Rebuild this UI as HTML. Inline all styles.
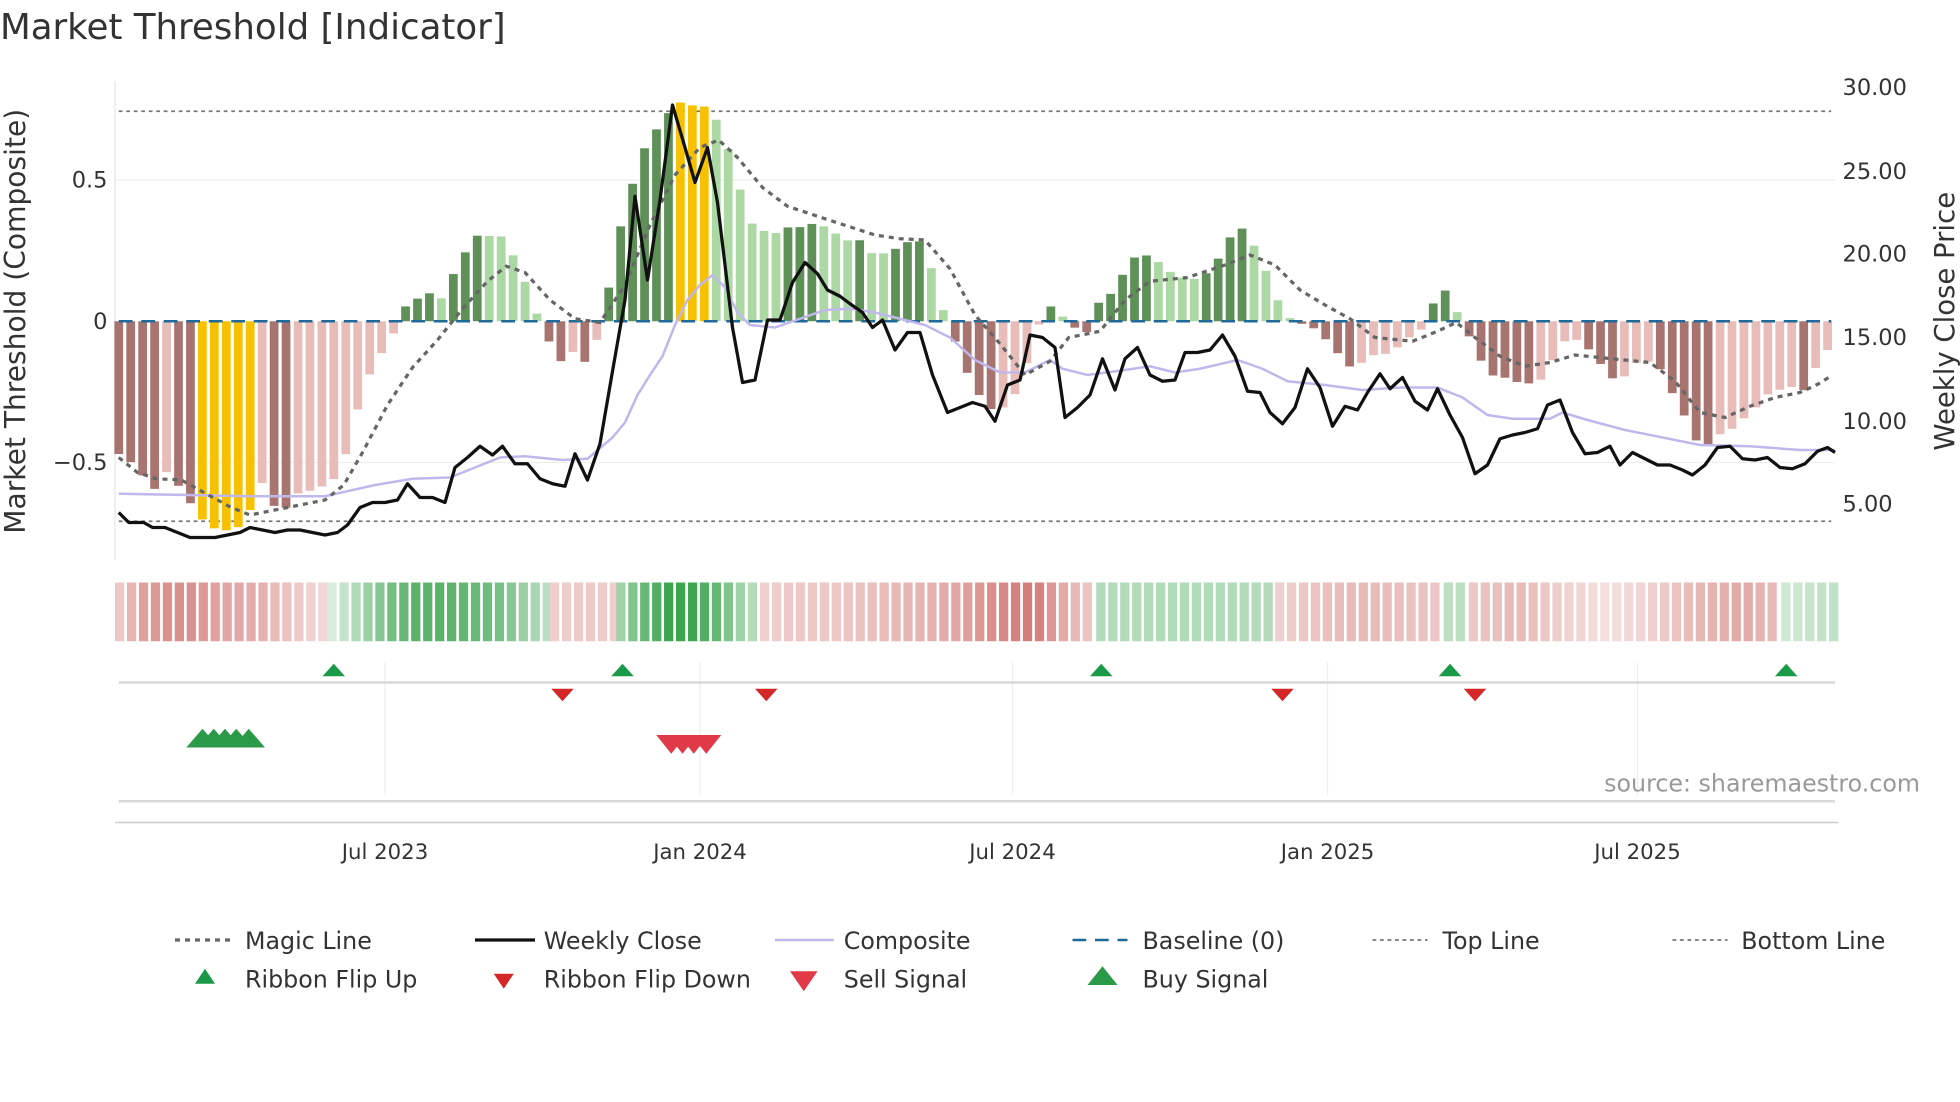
<!DOCTYPE html>
<html><head><meta charset="utf-8"><style>
html,body{margin:0;padding:0;background:#fff;width:1960px;height:1102px;overflow:hidden}
svg{display:block}
text{font-family:"DejaVu Sans","Liberation Sans",sans-serif;fill:#333}
</style></head><body>
<svg id="s" width="1960" height="1102" viewBox="0 0 1568 881.6" xmlns="http://www.w3.org/2000/svg">
<text x="0" y="31" font-size="28.5">Market Threshold [Indicator]</text>
<line x1="92" y1="65" x2="92" y2="448" stroke="#e4e4ec" stroke-width="1"/>
<line x1="92" y1="144" x2="1468" y2="144" stroke="#eee" stroke-width="1"/>
<line x1="92" y1="370" x2="1468" y2="370" stroke="#eee" stroke-width="1"/>
<line x1="95" y1="89" x2="1465" y2="89" stroke="#777" stroke-width="1.4" stroke-dasharray="3,3"/>
<line x1="95" y1="417" x2="1465" y2="417" stroke="#777" stroke-width="1.4" stroke-dasharray="3,3"/>
<g id="bars"></g>
<line x1="95" y1="257" x2="1465" y2="257" stroke="#1f6a9a" stroke-width="2" stroke-dasharray="11,7"/>
<polyline id="comp" fill="none" stroke="#c0b8ec" stroke-width="2"/>
<polyline id="magic" fill="none" stroke="#666" stroke-width="2.6" stroke-dasharray="4,4"/>
<polyline id="close" fill="none" stroke="#111" stroke-width="2.6" stroke-linejoin="round"/>
<text x="86" y="150" font-size="18" text-anchor="end">0.5</text>
<text x="86" y="263" font-size="18" text-anchor="end">0</text>
<text x="86" y="376" font-size="18" text-anchor="end">−0.5</text>
<text x="1474" y="76" font-size="18">30.00</text>
<text x="1474" y="143" font-size="18">25.00</text>
<text x="1474" y="209" font-size="18">20.00</text>
<text x="1474" y="276" font-size="18">15.00</text>
<text x="1474" y="343" font-size="18">10.00</text>
<text x="1474" y="409" font-size="18">5.00</text>
<text transform="translate(20,257) rotate(-90)" font-size="22.5" text-anchor="middle">Market Threshold (Composite)</text>
<text transform="translate(1563,257) rotate(-90)" font-size="22" text-anchor="middle">Weekly Close Price</text>
<g id="rib"></g>
<g stroke="#eceef2" stroke-width="1">
<line x1="308" y1="530" x2="308" y2="636"/><line x1="560" y1="530" x2="560" y2="636"/><line x1="810" y1="530" x2="810" y2="636"/><line x1="1062" y1="530" x2="1062" y2="636"/><line x1="1310" y1="530" x2="1310" y2="636"/>
</g>
<line x1="95" y1="546" x2="1468" y2="546" stroke="#d8d8d8" stroke-width="2"/>
<line x1="95" y1="641" x2="1468" y2="641" stroke="#d8d8d8" stroke-width="2"/>
<line x1="92" y1="658" x2="1471" y2="658" stroke="#ccc" stroke-width="1.2"/>
<g id="mk"></g>
<text x="1536" y="633" font-size="19" text-anchor="end" style="fill:#999">source: sharemaestro.com</text>
<g font-size="17" text-anchor="middle">
<text x="308" y="687">Jul 2023</text><text x="560" y="687">Jan 2024</text><text x="810" y="687">Jul 2024</text><text x="1062" y="687">Jan 2025</text><text x="1310" y="687">Jul 2025</text>
</g>
<g font-size="19">
<line x1="140" y1="752" x2="185" y2="752" stroke="#666" stroke-width="2.6" stroke-dasharray="4,4"/><text x="196" y="759">Magic Line</text>
<line x1="380" y1="752" x2="428" y2="752" stroke="#111" stroke-width="2.6"/><text x="435" y="759">Weekly Close</text>
<line x1="620" y1="752" x2="667" y2="752" stroke="#c0b8ec" stroke-width="2"/><text x="675" y="759">Composite</text>
<line x1="858" y1="752" x2="902" y2="752" stroke="#1f6a9a" stroke-width="2" stroke-dasharray="11,7"/><text x="914" y="759">Baseline (0)</text>
<line x1="1098" y1="752" x2="1142" y2="752" stroke="#777" stroke-width="1.4" stroke-dasharray="3,3"/><text x="1154" y="759">Top Line</text>
<line x1="1338" y1="752" x2="1382" y2="752" stroke="#777" stroke-width="1.4" stroke-dasharray="3,3"/><text x="1393" y="759">Bottom Line</text>
<polygon points="164,775 172,787 156,787" fill="#1a9a48"/><text x="196" y="790">Ribbon Flip Up</text>
<polygon points="395,779 411,779 403,791" fill="#d42828"/><text x="435" y="790">Ribbon Flip Down</text>
<polygon points="632,777 654,777 643,793" fill="#e03a48"/><text x="675" y="790">Sell Signal</text>
<polygon points="882,773 894,788 870,788" fill="#2a9a48"/><text x="914" y="790">Buy Signal</text>
</g>
</svg>
<script>
var NS="http://www.w3.org/2000/svg";
function el(p,t,a){var e=document.createElementNS(NS,t);for(var k in a)e.setAttribute(k,a[k]);p.appendChild(e);return e;}
var V=[[95,-.47],[105,-.5],[115,-.55],[125,-.6],[135,-.52],[145,-.6],[155,-.66],[165,-.72],[175,-.74],[185,-.74],[195,-.72],[210,-.57],[220,-.66],[230,-.66],[240,-.6],[250,-.6],[260,-.58],[270,-.55],[280,-.43],[290,-.24],[300,-.15],[310,-.08],[318,-.02],[326,.07],[334,.08],[343,.1],[353,.08],[363,.17],[373,.25],[383,.31],[393,.3],[403,.3],[412,.22],[421,.13],[431,.01],[440,-.08],[450,-.15],[460,-.1],[469,-.15],[478,-.06],[488,.14],[498,.37],[507,.5],[517,.63],[527,.69],[537,.75],[546,.78],[556,.76],[566,.76],[575,.7],[585,.58],[595,.42],[604,.32],[614,.32],[623,.31],[633,.34],[643,.33],[652,.35],[662,.33],[672,.3],[681,.28],[691,.29],[700,.22],[710,.25],[720,.26],[729,.29],[738,.28],[748,.15],[757,0],[767,-.1],[776,-.21],[786,-.28],[795,-.32],[805,-.3],[815,-.24],[825,-.1],[834,.03],[843,.06],[853,0],[862,-.03],[871,-.04],[880,.08],[890,.1],[900,.18],[910,.24],[920,.23],[930,.2],[940,.16],[950,.15],[960,.15],[970,.19],[980,.26],[990,.35],[1000,.29],[1010,.22],[1018,.1],[1028,.04],[1036,-.02],[1046,0],[1056,-.05],[1066,-.08],[1076,-.16],[1086,-.16],[1096,-.12],[1106,-.12],[1116,-.1],[1126,-.06],[1136,-.04],[1146,.06],[1156,.11],[1166,.03],[1176,-.06],[1186,-.15],[1196,-.2],[1206,-.2],[1216,-.22],[1226,-.22],[1236,-.2],[1246,-.1],[1256,-.05],[1266,-.08],[1276,-.12],[1286,-.19],[1296,-.22],[1306,-.15],[1316,-.14],[1326,-.15],[1336,-.24],[1346,-.32],[1356,-.42],[1366,-.44],[1376,-.4],[1386,-.38],[1396,-.34],[1406,-.3],[1416,-.25],[1426,-.24],[1436,-.23],[1446,-.25],[1456,-.12],[1466,-.09]];
var bars=document.getElementById("bars");
function interp(x){for(var i=0;i<V.length-1;i++){if(x<=V[i+1][0]){var t=(x-V[i][0])/(V[i+1][0]-V[i][0]);return V[i][1]+t*(V[i+1][1]-V[i][1]);}}return V[V.length-1][1];}
var prev=-.45,N=144;
for(var i=0;i<N;i++){var x=95+i*9.56;if(x>1468)break;var v=interp(x);var y0=257,h=v*226;var c;
 if((x>160&&x<205)||(x>540&&x<570))c="#f7c100";
 else if(v>=0)c=(v>prev)?"#5e9058":"#acd8a4";
 else c=(v<prev)?"#a87470":"#e8bcb8";
 el(bars,"rect",{x:x-3.5,y:h>0?y0-h:y0,width:7,height:Math.max(Math.abs(h),1),fill:c});prev=v;}
var C=[[95,410],[103,418],[115,418],[122,422],[132,422],[142,426],[152,430],[162,430],[172,430],[182,428],[192,426],[200,422],[210,424],[220,426],[230,424],[240,424],[250,426],[260,428],[270,426],[278,420],[288,406],[298,402],[308,402],[318,400],[326,387],[336,398],[346,398],[356,402],[364,374],[374,366],[384,357],[394,364],[402,357],[412,371],[422,371],[432,383],[442,387],[452,389],[460,363],[470,384],[480,355],[490,297],[500,240],[508,157],[518,224],[528,160],[538,84],[548,118],[556,146],[566,118],[574,162],[586,262],[594,306],[604,304],[614,256],[624,256],[634,226],[644,210],[654,219],[662,232],[672,237],[680,243],[690,250],[698,262],[706,256],[716,280],[726,266],[736,266],[746,300],[758,330],[768,326],[778,322],[788,325],[796,337],[806,308],[816,304],[824,268],[834,270],[844,278],[852,334],[862,326],[872,316],[882,287],[892,312],[900,287],[910,278],[920,300],[930,305],[940,304],[948,282],[958,282],[968,280],[978,268],[988,285],[998,313],[1008,314],[1016,330],[1026,339],[1036,326],[1046,295],[1056,310],[1066,341],[1076,325],[1086,328],[1094,314],[1104,299],[1112,311],[1122,302],[1132,321],[1142,328],[1150,311],[1160,332],[1170,350],[1180,379],[1190,372],[1200,351],[1210,348],[1220,346],[1230,343],[1238,324],[1248,320],[1258,346],[1268,363],[1278,362],[1288,357],[1296,372],[1306,362],[1316,367],[1326,372],[1336,372],[1346,376],[1354,380],[1364,372],[1374,358],[1384,357],[1394,367],[1404,368],[1414,366],[1424,374],[1434,375],[1444,371],[1454,361],[1462,358],[1468,362]];
var P=[[95,395],[150,396],[200,397],[260,397],[300,388],[330,383],[360,382],[400,366],[420,365],[450,368],[470,367],[490,350],[500,338],[510,316],[520,300],[530,285],[540,260],[550,240],[560,228],[570,220],[580,230],[590,250],[600,260],[620,262],[640,255],[660,248],[680,247],[700,250],[720,255],[740,260],[760,270],[780,288],[800,298],[820,298],[840,288],[850,295],[870,300],[900,296],[920,293],[940,298],[960,295],[990,288],[1010,295],[1030,305],[1060,308],[1090,312],[1120,310],[1150,310],[1170,318],[1190,332],[1210,335],[1240,335],[1250,330],[1270,336],[1300,344],[1330,350],[1360,356],[1400,357],[1440,360],[1468,360]];
var M=[[95,366],[110,378],[125,383],[145,384],[165,395],[185,406],[200,412],[230,406],[260,400],[275,388],[290,362],[310,324],[330,294],[350,272],[370,247],[390,225],[405,213],[420,218],[440,240],[460,255],[480,258],[500,228],[520,180],[540,140],[560,118],[575,112],[590,126],[610,150],[630,165],[660,175],[700,188],[720,191],[740,192],[760,215],[780,252],[800,275],[820,300],[840,289],[855,270],[880,265],[900,240],[920,225],[950,222],[980,212],[1000,204],[1020,212],[1040,232],[1060,244],[1080,255],[1100,270],[1130,273],[1150,265],[1165,258],[1180,270],[1200,285],[1220,293],[1240,290],[1260,284],[1280,286],[1300,288],[1320,290],[1340,305],[1360,330],[1380,334],[1400,325],[1420,318],[1440,314],[1455,307],[1466,300]];
function pts(a){return a.map(function(p){return p.join(",")}).join(" ");}
document.getElementById("close").setAttribute("points",pts(C));
document.getElementById("comp").setAttribute("points",pts(P));
document.getElementById("magic").setAttribute("points",pts(M));
var rib=document.getElementById("rib");
var R=[[92,262,-1,[.35,.6,.7,.7,.6,.55,.5,.4,.3,.2]],[262,440,1,[.2,.45,.7,.85,.85,.8,.7,.5,.3]],[440,493,-1,[.3,.35,.3]],[493,608,1,[.5,.8,1,1,.8,.5,.3]],[608,877,-1,[.3,.35,.35,.4,.45,.5,.6,.75,.85,.5,.3]],[877,1020,1,[.4,.4,.4,.4]],[1020,1155,-1,[.3,.4,.45,.4,.35]],[1155,1175,1,[.35]],[1175,1425,-1,[.35,.45,.3,.2,.3,.45,.55,.4]],[1425,1471,1,[.25,.35]]];
for(var j=0;j<R.length;j++){var s=R[j];for(var x=s[0];x+7<=s[1]+2;x+=9.56){var t=(x-s[0])/(s[1]-s[0]);var a=s[3],k=t*(a.length-1),i0=Math.floor(k),f=k-i0;var w=a[i0]+(a[Math.min(i0+1,a.length-1)]-a[i0])*f;
 var base=s[2]>0?[52,160,72]:[200,90,85];var r=Math.round(255-(255-base[0])*w*0.95),g=Math.round(255-(255-base[1])*w*0.95),b=Math.round(255-(255-base[2])*w*0.95);
 el(rib,"rect",{x:x,y:466,width:7.4,height:47,fill:"rgb("+r+","+g+","+b+")"});}}
var mk=document.getElementById("mk");
[267,498,881,1160,1429].forEach(function(x){el(mk,"polygon",{points:(x)+",531 "+(x+9)+",541 "+(x-9)+",541",fill:"#1a9a48"});});
[450,613,1026,1180].forEach(function(x){el(mk,"polygon",{points:(x-9)+",551 "+(x+9)+",551 "+x+",561",fill:"#d42828"});});
[162,171,180,189,199].forEach(function(x){el(mk,"polygon",{points:x+",583 "+(x+13)+",598 "+(x-13)+",598",fill:"#2a9a48"});});
[537,546,555,565].forEach(function(x){el(mk,"polygon",{points:(x-12)+",588 "+(x+12)+",588 "+x+",603",fill:"#e03a48"});});
</script>
</body></html>
